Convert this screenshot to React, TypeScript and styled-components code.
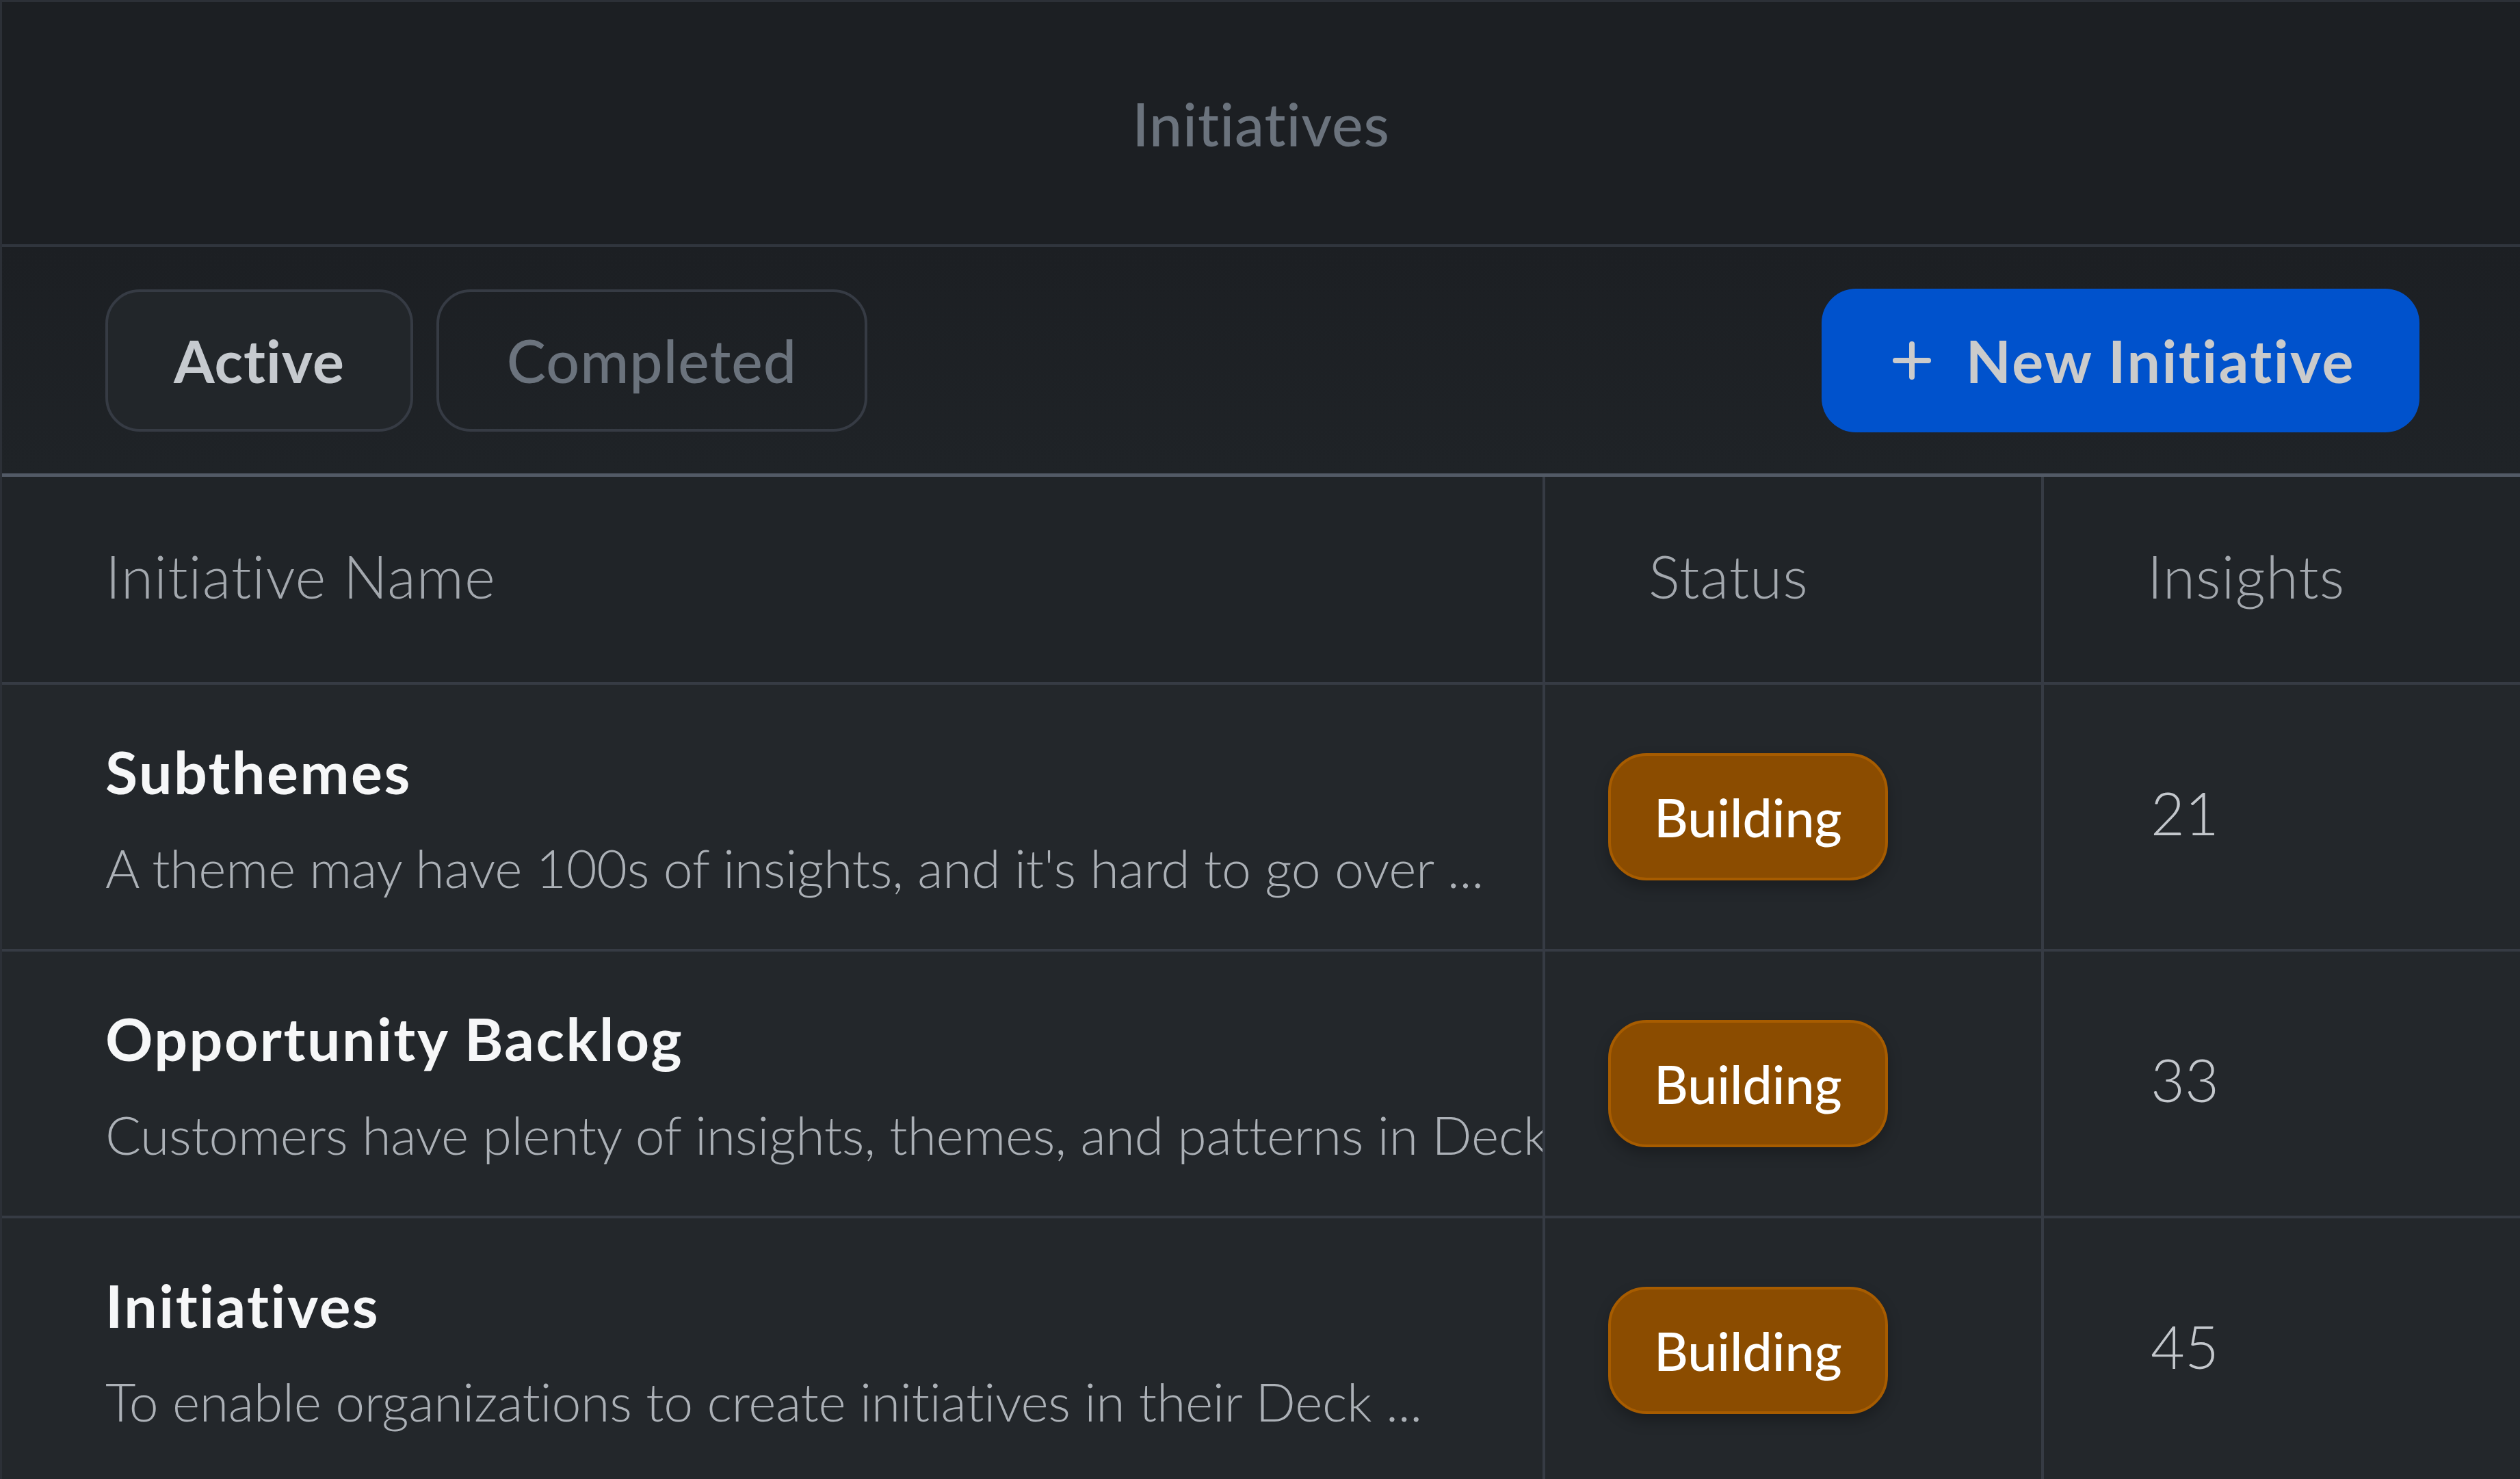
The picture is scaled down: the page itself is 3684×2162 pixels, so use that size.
import styled, { createGlobalStyle } from "styled-components";

type Initiative = {
  name: string;
  summary: string;
  status: string;
  insights: number;
};

const initiatives: Initiative[] = [
  {
    name: "Subthemes",
    summary: "A theme may have 100s of insights, and it's hard to go over ...",
    status: "Building",
    insights: 21,
  },
  {
    name: "Opportunity Backlog",
    summary:
      "Customers have plenty of insights, themes, and patterns in Deck that need a home",
    status: "Building",
    insights: 33,
  },
  {
    name: "Initiatives",
    summary: "To enable organizations to create initiatives in their Deck ...",
    status: "Building",
    insights: 45,
  },
];

const GlobalStyle = createGlobalStyle`
  html, body {
    margin: 0;
    padding: 0;
    background: #23272b;
  }
  body {
    font-family: "Lato", "Open Sans", sans-serif;
    font-variant-ligatures: none;
  }
  * {
    box-sizing: border-box;
  }
`;

const App: React.FC = () => {
  return (
    <>
      <GlobalStyle />
      <Frame>
        <TopBar>
          <PageTitle>Initiatives</PageTitle>
        </TopBar>
        <Toolbar>
          <Tabs>
            <Tab $active>Active</Tab>
            <Tab>Completed</Tab>
          </Tabs>
          <PrimaryButton>
            <PlusIcon viewBox="0 0 56 56">
              <path d="M28 4v48M4 28h48" />
            </PlusIcon>
            New Initiative
          </PrimaryButton>
        </Toolbar>
        <Table>
          <HeadRow>
            <HeadCell>Initiative Name</HeadCell>
            <HeadCell>Status</HeadCell>
            <HeadCell $last>Insights</HeadCell>
          </HeadRow>
          {initiatives.map((item) => (
            <Row key={item.name}>
              <NameCell>
                <Name>{item.name}</Name>
                <Summary>{item.summary}</Summary>
              </NameCell>
              <StatusCell>
                <Badge>{item.status}</Badge>
              </StatusCell>
              <CountCell>{item.insights}</CountCell>
            </Row>
          ))}
        </Table>
      </Frame>
    </>
  );
};

export default App;

const Frame = styled.div`
  min-height: 100vh;
  border-top: 3px solid #2c3037;
  border-left: 3px solid #2c3037;
  background: #23272b;
  overflow: hidden;
`;

const TopBar = styled.header`
  height: 358px;
  display: flex;
  align-items: center;
  justify-content: center;
  background: #1c1f23;
  border-bottom: 4px solid #30353d;
`;

const PageTitle = styled.h1`
  margin: 0;
  font-size: 86px;
  font-weight: 500;
  letter-spacing: 1px;
  color: #6b737d;
`;

const Toolbar = styled.div`
  height: 336px;
  padding: 0 147px 0 151px;
  display: flex;
  align-items: center;
  justify-content: space-between;
  background: linear-gradient(#1c1f23, #1f2327);
  border-bottom: 5px solid #525a66;
`;

const Tabs = styled.div`
  display: flex;
  gap: 34px;
`;

const Tab = styled.button<{ $active?: boolean }>`
  height: 208px;
  padding: 0 ${(p) => (p.$active ? 96 : 99)}px;
  border: 4px solid #363b44;
  border-radius: 50px;
  background: ${(p) => (p.$active ? "#22262a" : "transparent")};
  color: ${(p) => (p.$active ? "#c6cacf" : "#6b737d")};
  font-family: inherit;
  font-size: 86px;
  font-weight: ${(p) => (p.$active ? 700 : 500)};
  letter-spacing: 1px;
  cursor: pointer;
`;

const PrimaryButton = styled.button`
  height: 210px;
  padding: 0 94px 0 104px;
  display: flex;
  align-items: center;
  gap: 51px;
  border: none;
  border-radius: 50px;
  background: #0052cc;
  color: #cbcbcb;
  font-family: inherit;
  font-size: 86px;
  font-weight: 700;
  letter-spacing: 2.5px;
  cursor: pointer;
`;

const PlusIcon = styled.svg`
  width: 56px;
  height: 56px;
  fill: none;
  stroke: #cbcbcb;
  stroke-width: 8;
  stroke-linecap: round;
`;

const Table = styled.div`
  display: flex;
  flex-direction: column;
`;

const HeadRow = styled.div`
  height: 304px;
  display: grid;
  grid-template-columns: 2256px 729px 1fr;
  background: #202428;
  border-bottom: 4px solid #363b44;
`;

const HeadCell = styled.div<{ $last?: boolean }>`
  display: flex;
  align-items: center;
  padding: 0 0 12px 151px;
  border-right: ${(p) => (p.$last ? "none" : "4px solid #363b44")};
  color: #a3a8ae;
  font-size: 86px;
  font-weight: 300;
  letter-spacing: 1px;
`;

const Row = styled.div`
  height: 390px;
  display: grid;
  grid-template-columns: 2256px 729px 1fr;
  background: #23272b;
  border-bottom: 4px solid #363b44;
`;

const NameCell = styled.div`
  min-width: 0;
  display: flex;
  flex-direction: column;
  gap: 40px;
  padding: 77px 0 0 151px;
  border-right: 4px solid #363b44;
  overflow: hidden;
`;

const Name = styled.div`
  font-size: 86px;
  line-height: 100px;
  font-weight: 700;
  letter-spacing: 2.5px;
  color: #f6f7f8;
  white-space: nowrap;
`;

const Summary = styled.div`
  font-size: 77px;
  line-height: 100px;
  font-weight: 300;
  letter-spacing: -0.3px;
  color: #acb1b7;
  white-space: nowrap;
  overflow: hidden;
`;

const StatusCell = styled.div`
  display: flex;
  align-items: center;
  padding-left: 92px;
  border-right: 4px solid #363b44;
`;

const Badge = styled.span`
  height: 186px;
  padding: 0 63px;
  display: inline-flex;
  align-items: center;
  border: 4px solid #a75c00;
  border-radius: 56px;
  background: #8b4c00;
  box-shadow: 0 10px 20px rgba(0, 0, 0, 0.25);
  color: #ffffff;
  font-size: 77px;
  font-weight: 500;
`;

const CountCell = styled.div`
  display: flex;
  align-items: center;
  padding: 0 0 14px 156px;
  color: #c3c7cc;
  font-size: 86px;
  font-weight: 300;
`;
